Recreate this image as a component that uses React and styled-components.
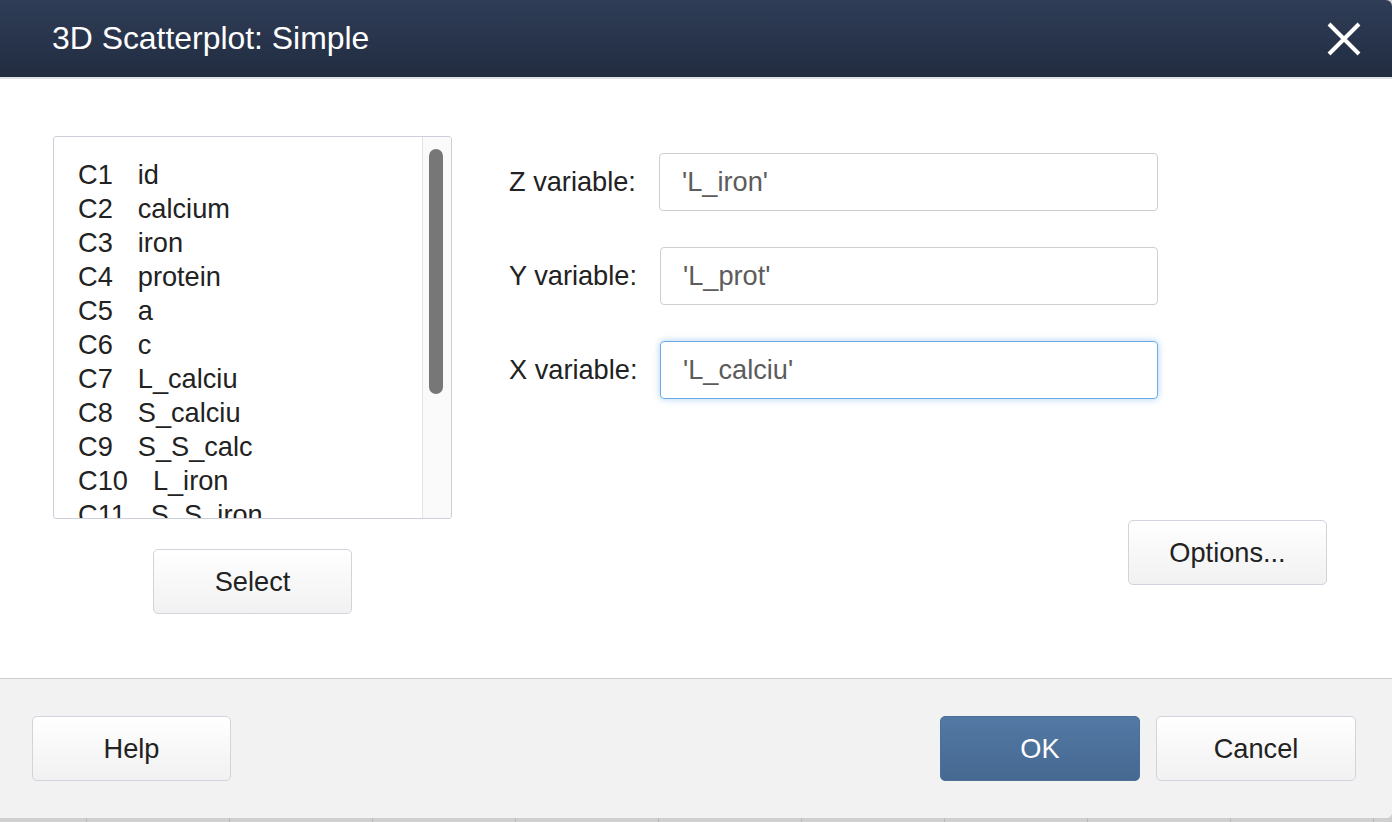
import React from 'react'
import styled, { createGlobalStyle } from 'styled-components'

const GlobalStyle = createGlobalStyle`
  html, body {
    margin: 0;
    padding: 0;
    background: #d2d2d2;
  }
  body {
    font-family: "Liberation Sans", Arial, Helvetica, sans-serif;
    color: #222;
  }
`

const Dialog = styled.div`
  width: 1392px;
  height: 818px;
  display: flex;
  flex-direction: column;
  background: #fff;
  border-radius: 0 6px 6px 0;
  overflow: hidden;
`

const Header = styled.div`
  height: 77px;
  flex: none;
  display: flex;
  align-items: center;
  justify-content: space-between;
  padding: 0 31px 0 52px;
  background: linear-gradient(#2f3d57, #212c40);
  border-bottom: 2px solid #dfe2e7;
`

const Title = styled.h1`
  margin: 0;
  font-size: 31.9px;
  font-weight: 400;
  color: #fff;
`

const CloseButton = styled.button`
  width: 34px;
  height: 34px;
  padding: 0;
  border: 0;
  background: none;
  display: flex;
  align-items: center;
  justify-content: center;
`

const Body = styled.div`
  height: 599px;
  flex: none;
  display: grid;
  grid-template-columns: 399px 1fr;
  padding: 57px 65px 0 53px;
  box-sizing: border-box;
`

const LeftColumn = styled.div`
  display: flex;
  flex-direction: column;
  align-items: center;
`

const ListBox = styled.div`
  width: 399px;
  height: 383px;
  box-sizing: border-box;
  border: 1.5px solid #cbd0d8;
  border-radius: 3px;
  display: flex;
  overflow: hidden;
`

const ListItems = styled.ul`
  flex: 1;
  margin: 0;
  padding: 21px 0 0 24px;
  list-style: none;
  overflow: hidden;
`

const ListItem = styled.li`
  height: 34px;
  line-height: 34px;
  font-size: 27.2px;
  white-space: nowrap;
`

const ColCode = styled.span`
  margin-right: 25px;
`

const ScrollTrack = styled.div`
  width: 29px;
  flex: none;
  background: #fafafa;
  border-left: 1.5px solid #e2e4e8;
  padding: 12px 0 0 6px;
  box-sizing: border-box;
`

const ScrollThumb = styled.div`
  width: 14px;
  height: 245px;
  border-radius: 7px;
  background: #777;
`

const Button = styled.button`
  width: ${p => p.$w || 199}px;
  height: 65px;
  box-sizing: border-box;
  font-family: inherit;
  font-size: 27.2px;
  border-radius: 5px;
  cursor: pointer;
  color: ${p => (p.$primary ? '#fff' : '#222')};
  border: 1.5px solid ${p => (p.$primary ? '#4a6f98' : '#cfd4dd')};
  background: ${p =>
    p.$primary
      ? 'linear-gradient(#5279a4, #466891)'
      : 'linear-gradient(#ffffff, #f1f1f2)'};
`

const SelectButton = styled(Button)`
  margin-top: 30px;
`

const RightColumn = styled.div`
  display: flex;
  flex-direction: column;
  padding: 17px 0 0 57px;
`

const FieldGrid = styled.div`
  display: grid;
  grid-template-columns: 150px 499px;
  row-gap: 36px;
  align-items: center;
`

const FieldLabel = styled.label`
  font-size: 27.2px;
  color: #222;
`

const FieldInput = styled.div`
  height: 58px;
  box-sizing: border-box;
  padding-left: 22px;
  display: flex;
  align-items: center;
  font-size: 27.2px;
  color: #5c5c5c;
  border-radius: 4px;
  border: 1.5px solid ${p => (p.$focused ? '#69ace6' : '#cfcfcf')};
  box-shadow: ${p => (p.$focused ? '0 0 7px rgba(102, 170, 232, 0.55)' : 'none')};
  margin-left: ${p => p.$shift || 0}px;
`

const OptionsRow = styled.div`
  display: flex;
  justify-content: flex-end;
  margin-top: 121px;
`

const Footer = styled.div`
  flex: 1;
  display: flex;
  align-items: center;
  justify-content: space-between;
  padding: 0 36px 0 32px;
  background: #f2f2f2;
  border-top: 1.5px solid #cdcdcd;
`

const FooterGroup = styled.div`
  display: flex;
  gap: 16px;
`

const Backdrop = styled.div`
  height: 4px;
  background:
    repeating-linear-gradient(
      to right,
      transparent 0,
      transparent 86px,
      #b9b9b9 86px,
      #b9b9b9 87px,
      transparent 87px,
      transparent 143px
    ),
    #cfcfcf;
`

const columns = [
  ['C1', 'id'],
  ['C2', 'calcium'],
  ['C3', 'iron'],
  ['C4', 'protein'],
  ['C5', 'a'],
  ['C6', 'c'],
  ['C7', 'L_calciu'],
  ['C8', 'S_calciu'],
  ['C9', 'S_S_calc'],
  ['C10', 'L_iron'],
  ['C11', 'S_S_iron'],
  ['C12', 'L_prot'],
]

const fields = [
  { label: 'Z variable:', value: "'L_iron'" },
  { label: 'Y variable:', value: "'L_prot'", shift: 1 },
  { label: 'X variable:', value: "'L_calciu'", shift: 1, focused: true },
]

const App = () => {
  return (
    <>
      <GlobalStyle />
      <Dialog>
        <Header>
          <Title>3D Scatterplot: Simple</Title>
          <CloseButton aria-label='Close'>
            <svg width='34' height='34' viewBox='0 0 34 34'>
              <path d='M2 2 L32 32 M32 2 L2 32' stroke='#fff' strokeWidth='4' />
            </svg>
          </CloseButton>
        </Header>
        <Body>
          <LeftColumn>
            <ListBox>
              <ListItems>
                {columns.map(([code, name]) => (
                  <ListItem key={code}>
                    <ColCode>{code}</ColCode>
                    {name}
                  </ListItem>
                ))}
              </ListItems>
              <ScrollTrack>
                <ScrollThumb />
              </ScrollTrack>
            </ListBox>
            <SelectButton>Select</SelectButton>
          </LeftColumn>
          <RightColumn>
            <FieldGrid>
              {fields.map(f => (
                <React.Fragment key={f.label}>
                  <FieldLabel>{f.label}</FieldLabel>
                  <FieldInput $focused={f.focused} $shift={f.shift}>
                    {f.value}
                  </FieldInput>
                </React.Fragment>
              ))}
            </FieldGrid>
            <OptionsRow>
              <Button>Options...</Button>
            </OptionsRow>
          </RightColumn>
        </Body>
        <Footer>
          <Button>Help</Button>
          <FooterGroup>
            <Button $primary $w={200}>OK</Button>
            <Button $w={200}>Cancel</Button>
          </FooterGroup>
        </Footer>
      </Dialog>
      <Backdrop />
    </>
  )
}

export default App
